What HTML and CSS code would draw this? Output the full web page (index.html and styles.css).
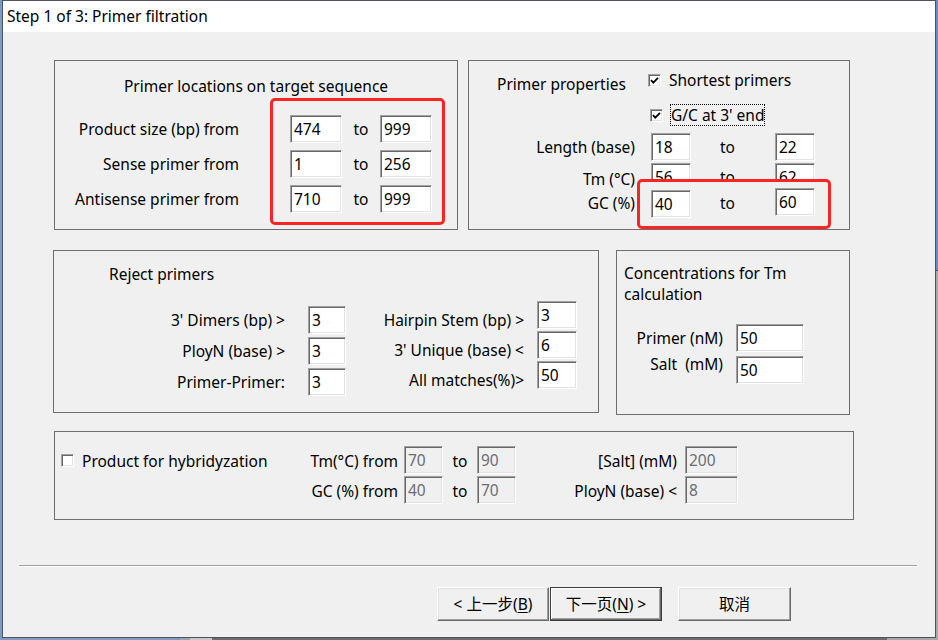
FILE: index.html
```html
<!DOCTYPE html>
<html>
<head>
<meta charset="utf-8">
<title>Primer filtration</title>
<link rel="stylesheet" href="styles.css">
</head>
<body>
<div class="screen">
  <div class="main">
    <div class="edge-l"></div>
    <div class="window">
      <div class="titlebar">Step 1 of 3: Primer filtration</div>
      <div class="content">
        <div class="row row1">
          <section class="box box-loc">
            <div class="loc-title">Primer locations on target sequence</div>
            <div class="loc-grid">
              <div class="llabel">Product size (bp) from</div>
              <div class="field">474</div>
              <div class="to">to</div>
              <div class="field">999</div>
              <div class="llabel">Sense primer from</div>
              <div class="field">1</div>
              <div class="to">to</div>
              <div class="field">256</div>
              <div class="llabel">Antisense primer from</div>
              <div class="field">710</div>
              <div class="to">to</div>
              <div class="field">999</div>
            </div>
            <div class="mark mark-a"></div>
          </section>
          <section class="box box-prop">
            <div class="prop-head">
              <div class="prop-title">Primer properties</div>
              <div class="prop-checks">
                <div class="check-row">
                  <span class="cbox"><svg width="9" height="9" viewBox="0 0 9 9"><path d="M1 4.2 L3.3 6.6 L8 1.8" fill="none" stroke="#000" stroke-width="1.8"/></svg></span>
                  <span>Shortest primers</span>
                </div>
                <div class="check-row second">
                  <span class="cbox"><svg width="9" height="9" viewBox="0 0 9 9"><path d="M1 4.2 L3.3 6.6 L8 1.8" fill="none" stroke="#000" stroke-width="1.8"/></svg></span>
                  <span class="focus">G/C at 3' end</span>
                </div>
              </div>
            </div>
            <div class="prop-grid">
              <div class="plabel r-len">Length (base)</div>
              <div class="field c1 r-len">18</div>
              <div class="pto r-len">to</div>
              <div class="field c2 r-len">22</div>

              <div class="plabel r-tm">Tm (°C)</div>
              <div class="field c1 r-tmf">56</div>
              <div class="pto r-tmf">to</div>
              <div class="field c2 r-tmf">62</div>

              <div class="cover"></div>

              <div class="plabel r-gc">GC (%)</div>
              <div class="field c1 r-gc1">40</div>
              <div class="pto r-gc">to</div>
              <div class="field c2 r-gc2">60</div>
            </div>
            <div class="mark mark-b"></div>
          </section>
        </div>

        <div class="row row2">
          <section class="box box-rej">
            <div class="rej-title">Reject primers</div>
            <div class="rej-body">
              <div class="rcol1">
                <div class="rlabel">3' Dimers (bp) &gt;</div>
                <div class="field">3</div>
                <div class="rlabel">PloyN (base) &gt;</div>
                <div class="field">3</div>
                <div class="rlabel">Primer-Primer:</div>
                <div class="field">3</div>
              </div>
              <div class="rcol2">
                <div class="rlabel low">Hairpin Stem (bp) &gt;</div>
                <div class="field">3</div>
                <div class="rlabel low">3' Unique (base) &lt;</div>
                <div class="field">6</div>
                <div class="rlabel low">All matches(%)&gt;</div>
                <div class="field">50</div>
              </div>
            </div>
          </section>
          <section class="box box-conc">
            <div class="conc-title">Concentrations for Tm<br>calculation</div>
            <div class="conc-grid">
              <div class="clabel">Primer (nM)</div>
              <div class="field">50</div>
              <div class="clabel up">Salt  (mM)</div>
              <div class="field">50</div>
            </div>
          </section>
        </div>

        <section class="box box-hyb">
          <div class="hyb-grid">
            <div class="hyb-check">
              <span class="cbox"></span>
              <span>Product for hybridyzation</span>
            </div>
            <div class="hlabel hc2 hr1">Tm(°C) from</div>
            <div class="field dis hc4 hr1">70</div>
            <div class="hto hc5 hr1">to</div>
            <div class="field dis hc6 hr1">90</div>
            <div class="hlabel hc7 hr1">[Salt] (mM)</div>
            <div class="field dis hc9 hr1">200</div>

            <div class="hlabel hc2 hr2">GC (%) from</div>
            <div class="field dis hc4 hr2">40</div>
            <div class="hto hc5 hr2">to</div>
            <div class="field dis hc6 hr2">70</div>
            <div class="hlabel hc7 hr2">PloyN (base) &lt;</div>
            <div class="field dis hc9 hr2">8</div>
          </div>
        </section>

        <div class="sep"></div>

        <div class="buttons">
          <div class="btn b1">&lt; 上一步(<u>B</u>)</div>
          <div class="btn b2 default">下一页(<u>N</u>) &gt;</div>
          <div class="btn b3">取消</div>
        </div>
      </div>
    </div>
    <div class="edge-r"><div class="er1"></div><div class="er2"></div></div>
  </div>
  <div class="strip"><span class="s1"></span><span class="s2"></span><span class="s3"></span><span class="s4"></span><span class="s5"></span></div>
</div>
</body>
</html>
```

FILE: styles.css
```css
* { box-sizing: border-box; }
html, body { margin: 0; padding: 0; }
body {
  width: 938px;
  height: 640px;
  overflow: hidden;
  background: #6e6e6e;
  font-family: "Noto Sans", "Noto Sans CJK SC", sans-serif;
  font-size: 15.5px;
  color: #000;
}
.screen { width: 938px; height: 640px; display: flex; flex-direction: column; }
.main { display: flex; height: 638px; }
.edge-l { width: 2px; background: #7f9bc3; }
.edge-r { width: 2px; display: flex; flex-direction: column; }
.er1 { height: 270px; background: #6a8cc4; }
.er2 { flex: 1; background: #a9a9a9; border-top: 1px solid #555; }
.window {
  width: 934px;
  height: 638px;
  border: 1px solid #4f535a;
  background: #f0f0f0;
  display: flex;
  flex-direction: column;
}
.titlebar {
  height: 31px;
  background: #fff;
  padding: 5px 0 0 4px;
  line-height: 20px;
  white-space: nowrap;
}
.content { flex: 1; padding-top: 28px; }
.row { display: flex; align-items: flex-start; }
.row1 { margin-left: 51px; }
.row2 { margin-top: 20px; margin-left: 50px; }

.box { border: 1px solid #6e6e6e; position: relative; }

.field {
  height: 28px;
  background: #fff;
  border: 1px solid;
  border-color: #a0a0a0 #fff #fff #a0a0a0;
  box-shadow: inset 1px 1px 0 #696969, inset -1px -1px 0 #e3e3e3;
  padding-left: 3px;
  display: flex;
  align-items: center;
  line-height: 20px;
  overflow: hidden;
  white-space: nowrap;
}
.field.dis { background: #f0f0f0; color: #6d6d6d; }

.cbox {
  width: 13px;
  height: 13px;
  flex: none;
  background: #fff;
  border: 1px solid;
  border-color: #a0a0a0 #fff #fff #a0a0a0;
  box-shadow: inset 1px 1px 0 #696969, inset -1px -1px 0 #e3e3e3;
  display: flex;
  align-items: center;
  justify-content: center;
}
.cbox svg { display: block; }

.mark {
  position: absolute;
  border: 3px solid #ff2424;
  border-radius: 5px;
  pointer-events: none;
  z-index: 2;
}

/* Box A */
.box-loc { width: 404px; height: 170px; }
.loc-title { margin-top: 15px; line-height: 20px; text-align: center; white-space: nowrap; }
.loc-grid {
  display: grid;
  margin-top: 19px;
  grid-template-columns: 235px 52px 38px 52px;
  grid-auto-rows: 28px;
  row-gap: 7px;
}
.llabel { padding-right: 51px; text-align: right; line-height: 28px; white-space: nowrap; }
.to { text-align: center; line-height: 28px; }
.mark-a { left: 215px; top: 37px; width: 175px; height: 127px; }

/* Box B */
.box-prop { width: 382px; height: 170px; margin-left: 10px; }
.prop-head { display: grid; grid-template-columns: 179px auto; padding-top: 9px; }
.prop-title { padding-left: 28px; margin-top: 4px; line-height: 20px; white-space: nowrap; }
.prop-checks { display: flex; flex-direction: column; align-items: flex-start; }
.check-row { display: flex; align-items: center; height: 20px; gap: 8px; white-space: nowrap; }
.check-row.second { margin-top: 14px; margin-left: 2px; height: 22px; gap: 7px; }
.focus { border: 1px dotted #000; height: 22px; line-height: 20px; padding-right: 0; }
.prop-grid {
  display: grid;
  margin-top: 7px;
  grid-template-columns: 166px 16px 40px 84px 40px;
  grid-template-rows: 28px 2px 19px 6px 2px 26px 2px;
}
.plabel { grid-column: 1; justify-self: end; align-self: center; line-height: 20px; white-space: nowrap; }
.c1 { grid-column: 3; }
.c2 { grid-column: 5; }
.pto { grid-column: 4; justify-self: start; padding-left: 29px; align-self: center; line-height: 20px; }
.r-len { grid-row: 1; }
.plabel.r-tm { grid-row: 3 / 6; margin-top: 4px; }
.r-tmf { grid-row: 3 / 6; }
.field.r-tmf { height: 27px; }
.cover { grid-column: 2 / 6; grid-row: 4 / 8; background: #f0f0f0; margin-left: 5px; }
.r-gc { grid-row: 5 / 8; }
.r-gc1 { grid-row: 6 / 8; }
.r-gc2 { grid-row: 5 / 7; }
.mark-b { left: 168px; top: 118px; width: 194px; height: 50px; }

/* Box C */
.box-rej { width: 546px; height: 163px; }
.rej-title { padding-left: 55px; margin-top: 13px; line-height: 20px; }
.rej-body { display: flex; align-items: flex-start; margin-top: 17px; }
.rcol1 {
  display: grid;
  grid-template-columns: 231px 38px;
  column-gap: 23px;
  grid-template-rows: repeat(3, 28px);
  row-gap: 3px;
  margin-top: 5px;
}
.rcol2 {
  display: grid;
  grid-template-columns: 178px 40px;
  column-gap: 13px;
  grid-template-rows: repeat(3, 28px);
  row-gap: 2px;
}
.rlabel { justify-self: end; align-self: center; line-height: 20px; white-space: nowrap; }
.rlabel.low { align-self: start; margin-top: 9px; }

/* Box D */
.box-conc { width: 234px; height: 165px; margin-left: 17px; }
.conc-title { padding-left: 7px; margin-top: 12px; line-height: 21px; white-space: nowrap; }
.conc-grid {
  display: grid;
  grid-template-columns: 106px 68px;
  column-gap: 13px;
  grid-template-rows: 28px 28px;
  row-gap: 4px;
  margin-top: 19px;
}
.clabel { justify-self: end; align-self: center; line-height: 20px; white-space: pre; }
.clabel.up { align-self: start; margin-top: -2px; }

/* Box E */
.box-hyb { width: 800px; height: 89px; padding-top: 14px; margin-top: 16px; margin-left: 51px; }
.hyb-grid {
  display: grid;
  grid-template-columns: 255px 88px 6px 39px 34px 39px 161px 8px 53px;
  grid-template-rows: 29px 29px;
  row-gap: 1px;
}
.hyb-check {
  grid-column: 1;
  grid-row: 1;
  display: flex;
  align-items: center;
  gap: 8px;
  padding-left: 6px;
  white-space: nowrap;
}
.hlabel { justify-self: end; align-self: center; line-height: 20px; white-space: nowrap; }
.hto { text-align: center; align-self: center; line-height: 20px; }
.hc2 { grid-column: 2; }
.hc4 { grid-column: 4; }
.hc5 { grid-column: 5; }
.hc6 { grid-column: 6; }
.hc7 { grid-column: 7; }
.hc9 { grid-column: 9; }
.hr1 { grid-row: 1; }
.hr2 { grid-row: 2; }

/* Footer */
.sep {
  margin: 45px 0 0 16px;
  width: 898px;
  height: 2px;
  border-top: 1px solid #a0a0a0;
  border-bottom: 1px solid #fff;
}
.buttons { display: flex; margin-top: 20px; padding-left: 434px; }
.btn {
  height: 34px;
  width: 112px;
  background: #f0f0f0;
  border: 1px solid;
  border-color: #fff #696969 #696969 #fff;
  box-shadow: inset -1px -1px 0 #a0a0a0, inset 1px 1px 0 #e3e3e3;
  display: flex;
  align-items: center;
  justify-content: center;
  line-height: 20px;
  white-space: nowrap;
}
.btn u { text-underline-offset: 2px; }
.b2 { margin-left: 1px; }
.b3 { margin-left: 16px; width: 113px; }
.btn.default {
  border: 1px solid #3c3c3c;
  box-shadow: inset -1px -1px 0 #696969, inset 1px 1px 0 #fff, inset -2px -2px 0 #a0a0a0;
}

.strip { display: flex; height: 2px; }
.strip span { display: block; height: 2px; }
.s1 { width: 180px; background: #7f9bc3; }
.s2 { width: 10px; background: #9aa5b5; }
.s3 { width: 22px; background: #c9c9c9; }
.s4 { flex: 1; background: #6d6d6d; }
.s5 { width: 51px; background: #a8a8a8; }
```
